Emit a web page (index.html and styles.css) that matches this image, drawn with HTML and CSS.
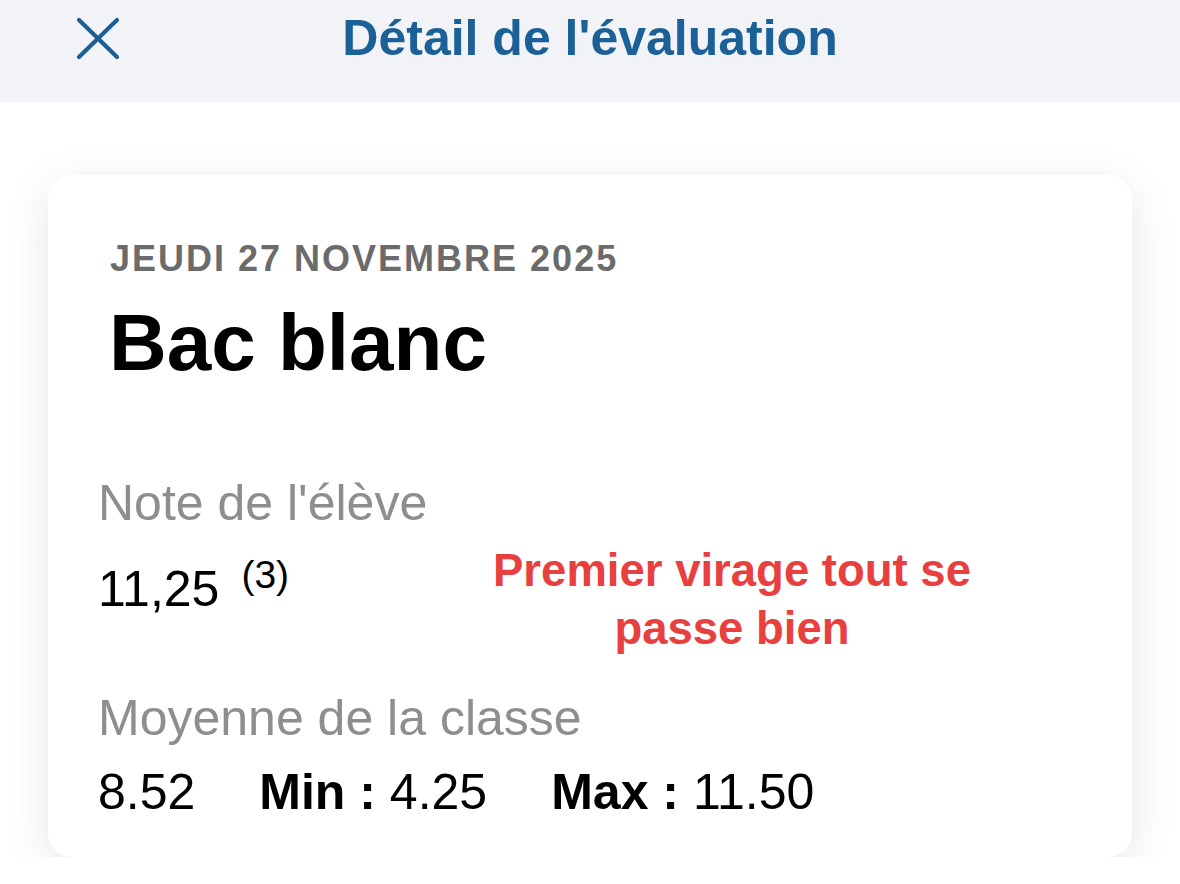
FILE: index.html
```html
<!DOCTYPE html>
<html lang="fr">
<head>
    <meta charset="UTF-8">
    <meta name="viewport" content="width=device-width, initial-scale=1.0">
    <title>Détail de l'évaluation</title>
    <link rel="stylesheet" href="styles.css">
</head>
<body>
    <header class="topbar">
        <button class="close-btn" aria-label="Fermer">
            <svg width="44" height="43" viewBox="0 0 44 43">
                <path d="M3 3 L41 40 M41 3 L3 40" stroke="currentColor" stroke-width="4.2" stroke-linecap="round" fill="none"/>
            </svg>
        </button>
        <h1 class="topbar-title">Détail de l'évaluation</h1>
        <span></span>
    </header>

    <main class="page">
        <section class="card">
            <div class="card-head">
                <div class="eval-date">Jeudi 27 novembre 2025</div>
                <h2 class="eval-title">Bac blanc</h2>
            </div>

            <div class="field-label">Note de l'élève</div>
            <div class="grade-row">
                <span class="value">11,25</span>
                <sup class="coef">(3)</sup>
                <p class="caption">Premier virage tout se passe bien</p>
            </div>

            <div class="field-label field-label--second">Moyenne de la classe</div>
            <div class="stats-row">
                <span class="value">8.52</span>
                <span class="value"><b>Min :</b> 4.25</span>
                <span class="value"><b>Max :</b> 11.50</span>
            </div>
        </section>
    </main>
</body>
</html>
```

FILE: styles.css
```css
body {
    margin: 0;
    font-family: 'Liberation Sans', Arial, sans-serif;
    background-color: #ffffff;
    color: #000;
}

.topbar {
    height: 102px;
    box-sizing: border-box;
    padding-top: 8px;
    background-color: #f2f3f6;
    display: grid;
    grid-template-columns: 1fr auto 1fr;
    align-items: start;
}

.close-btn {
    justify-self: start;
    margin: 9px 0 0 76px;
    padding: 0;
    border: none;
    background: none;
    color: #1b5f95;
    line-height: 0;
    cursor: pointer;
}

.topbar-title {
    margin: 0;
    font-size: 50px;
    line-height: 60px;
    font-weight: bold;
    color: #1b6097;
}

.page {
    padding: 73px 48px 0;
}

.card {
    background: #fff;
    border-radius: 24px;
    box-shadow: 0 10px 44px rgba(0, 0, 0, 0.1);
    padding: 62px 50px 35px;
}

.card-head {
    padding-left: 12px;
}

.eval-date {
    font-size: 36px;
    line-height: 43px;
    font-weight: bold;
    letter-spacing: 2px;
    text-transform: uppercase;
    color: #6b6b6b;
}

.eval-title {
    margin: 15px 0 0 -1px;
    font-size: 80px;
    line-height: 96px;
    font-weight: bold;
}

.field-label {
    margin-top: 82px;
    font-size: 50px;
    line-height: 60px;
    color: #8e8e8e;
}

.field-label--second {
    margin-top: 69px;
}

.value {
    font-size: 50px;
    line-height: 60px;
}

.grade-row {
    position: relative;
    margin-top: 26px;
    display: flex;
    align-items: flex-start;
}

.coef {
    margin-left: 22px;
    font-size: 39px;
    line-height: 39px;
    position: relative;
    top: -4px;
}

/* caption laid over the grade row */
.caption {
    position: absolute;
    left: 354px;
    top: -17px;
    width: 560px;
    margin: 0;
    text-align: center;
    font-size: 45.5px;
    line-height: 58px;
    font-weight: bold;
    color: #e8403f;
}

.stats-row {
    margin-top: 14px;
    display: flex;
    gap: 64px;
}
```
